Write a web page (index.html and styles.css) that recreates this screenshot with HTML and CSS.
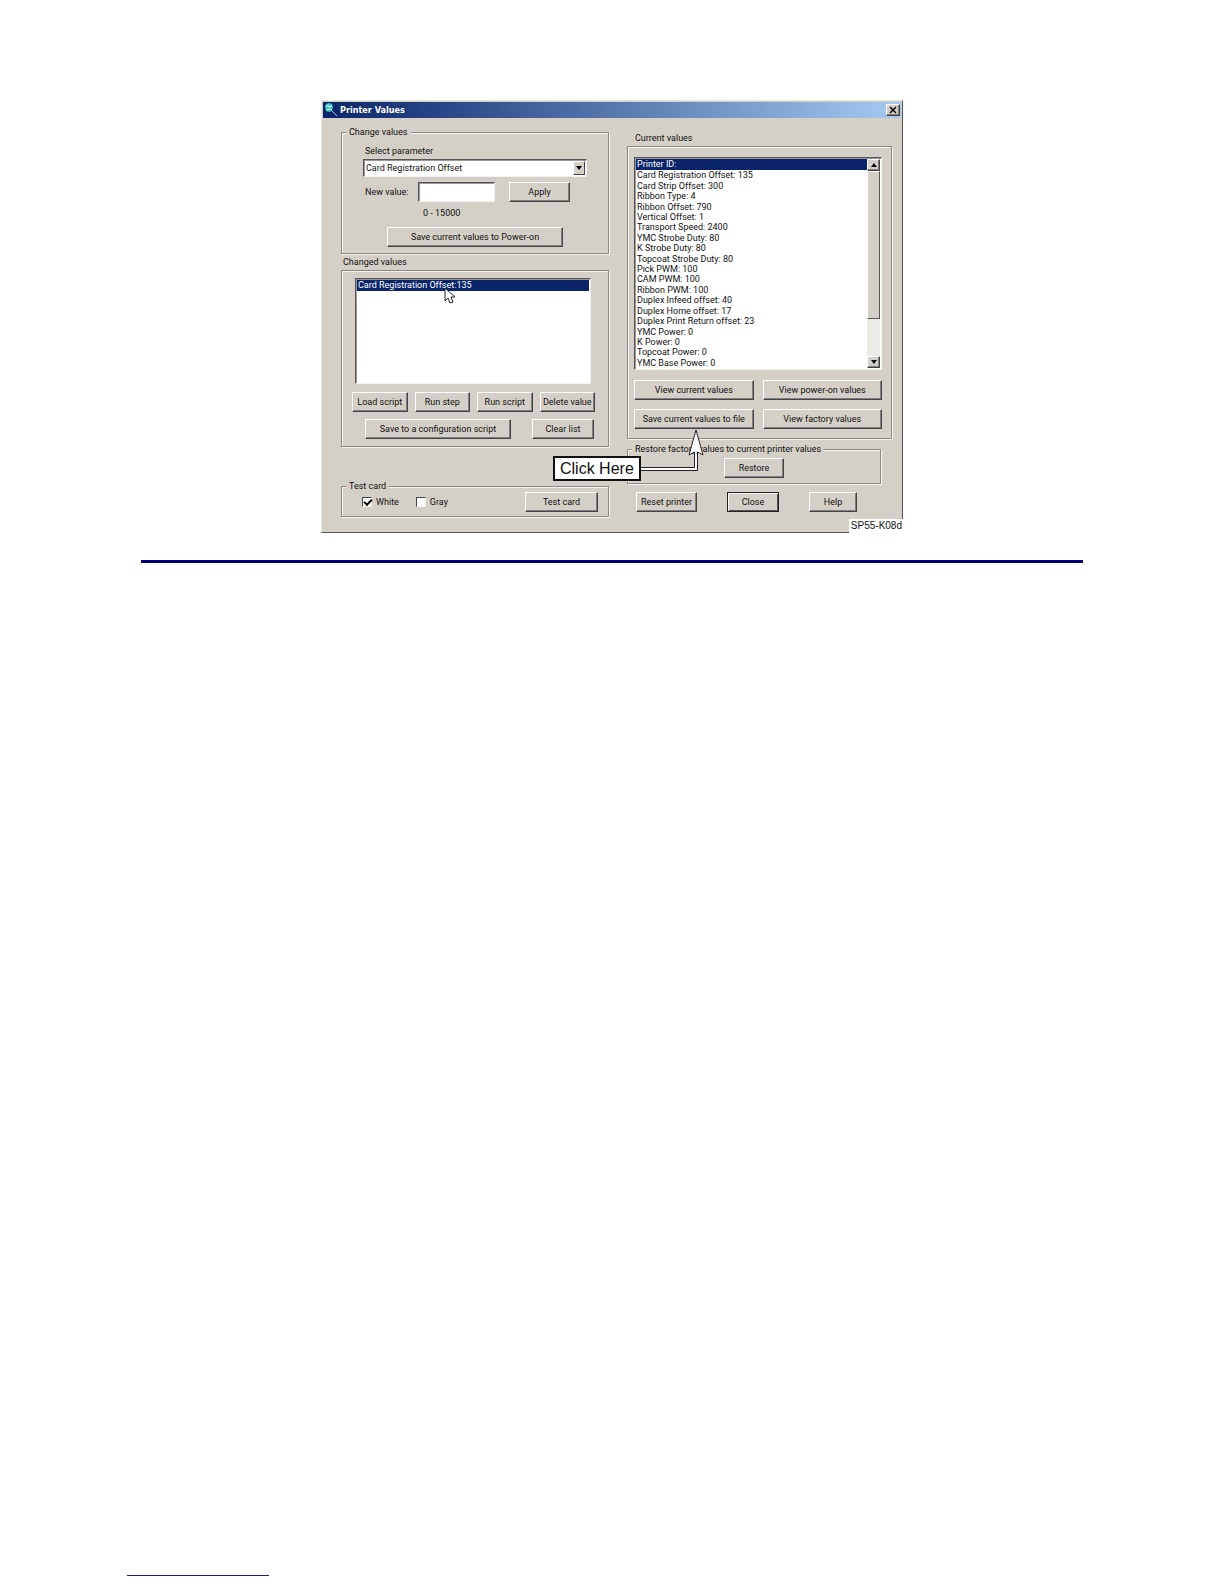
FILE: index.html
```html
<!DOCTYPE html>
<html lang="en">
<head>
    <meta charset="UTF-8">
    <meta name="viewport" content="width=device-width, initial-scale=1.0">
    <title>Printer Values</title>
    <link rel="stylesheet" href="styles.css">
</head>
<body>
    <main>
        <div class="dialog">
            <div class="title-bar">
                <svg class="app-icon" viewBox="0 0 14 14">
                    <path d="M2 1l3-1 3 1 1 3-1 4-3 1-3-1-1-4z" fill="#3fc4bf"/>
                    <path d="M2 4l2-2 1 2 3-1M3 7l3-1 2 1" stroke="#d8fffb" fill="none"/>
                    <path d="M8 8l5 5" stroke="#a9bcd8"/>
                </svg>
                <h1>Printer Values</h1>
                <button class="close-x" aria-label="Close window">
                    <svg viewBox="0 0 8 8"><path d="M1 1l6 6M7 1l-6 6" stroke="#000" stroke-width="1.5"/></svg>
                </button>
            </div>

            <div class="dialog-body">
                <div class="left">
                    <fieldset class="change">
                        <legend>Change values</legend>
                        <div class="change-body">
                            <label for="parameter">Select parameter</label>
                            <div class="dropdown">
                                <select id="parameter">
                                    <option>Card Registration Offset</option>
                                </select>
                                <span class="drop-arrow"><svg viewBox="0 0 6 4"><path d="M0 0h6L3 4z"/></svg></span>
                            </div>
                            <div class="value-row">
                                <label for="new-value">New value:</label>
                                <input type="text" id="new-value">
                                <button>Apply</button>
                            </div>
                            <div class="range">0 - 15000</div>
                            <button class="save-power">Save current values to Power-on</button>
                        </div>
                    </fieldset>

                    <div class="group-label" id="changed-label">Changed values</div>
                    <div class="group changed">
                        <ul class="list" role="listbox" aria-labelledby="changed-label">
                            <li class="selected" role="option" aria-selected="true">Card Registration Offset:135</li>
                        </ul>
                        <div class="script-buttons">
                            <button>Load script</button>
                            <button>Run step</button>
                            <button>Run script</button>
                            <button>Delete value</button>
                        </div>
                        <div class="list-buttons">
                            <button class="save-script">Save to a configuration script</button>
                            <button class="clear">Clear list</button>
                        </div>
                    </div>

                    <fieldset class="test">
                        <legend>Test card</legend>
                        <div class="test-row">
                            <label><input type="checkbox" checked>White</label>
                            <label><input type="checkbox">Gray</label>
                            <button>Test card</button>
                        </div>
                    </fieldset>
                </div>

                <div class="right">
                    <div class="group-label" id="current-label">Current values</div>
                    <div class="group current">
                        <div class="list-box">
                            <ul class="list" role="listbox" aria-labelledby="current-label">
                                <li class="selected" role="option" aria-selected="true">Printer ID:</li>
                                <li role="option">Card Registration Offset: 135</li>
                                <li role="option">Card Strip Offset: 300</li>
                                <li role="option">Ribbon Type: 4</li>
                                <li role="option">Ribbon Offset: 790</li>
                                <li role="option">Vertical Offset: 1</li>
                                <li role="option">Transport Speed: 2400</li>
                                <li role="option">YMC Strobe Duty: 80</li>
                                <li role="option">K Strobe Duty: 80</li>
                                <li role="option">Topcoat Strobe Duty: 80</li>
                                <li role="option">Pick PWM: 100</li>
                                <li role="option">CAM PWM: 100</li>
                                <li role="option">Ribbon PWM: 100</li>
                                <li role="option">Duplex Infeed offset: 40</li>
                                <li role="option">Duplex Home offset: 17</li>
                                <li role="option">Duplex Print Return offset: 23</li>
                                <li role="option">YMC Power: 0</li>
                                <li role="option">K Power: 0</li>
                                <li role="option">Topcoat Power: 0</li>
                                <li role="option">YMC Base Power: 0</li>
                            </ul>
                            <div class="scrollbar">
                                <button aria-label="Scroll up"><svg viewBox="0 0 6 4"><path d="M0 4h6L3 0z"/></svg></button>
                                <div class="thumb"></div>
                                <button aria-label="Scroll down"><svg viewBox="0 0 6 4"><path d="M0 0h6L3 4z"/></svg></button>
                            </div>
                        </div>
                        <div class="view-buttons">
                            <button>View current values</button>
                            <button>View power-on values</button>
                            <button>Save current values to file</button>
                            <button>View factory values</button>
                        </div>
                    </div>

                    <fieldset class="restore">
                        <legend>Restore factory values to current printer values</legend>
                        <button>Restore</button>
                    </fieldset>

                    <div class="bottom-buttons">
                        <button class="reset">Reset printer</button>
                        <button class="close">Close</button>
                        <button class="help">Help</button>
                    </div>
                </div>
            </div>

            <svg class="cursor" viewBox="0 0 12 18">
                <path d="M1 1v13l3-3 2 5 3-1-2-5h4z" fill="#fff" stroke="#222"/>
            </svg>

            <!-- callout -->
            <svg class="arrow" viewBox="0 0 64 46">
                <path d="M0 39.500H53.500V24L48 27L55 2L62 27L56.500 24V42.500H0" fill="#fff" stroke="#222"/>
            </svg>
            <div class="click-here">Click Here</div>
            <div class="figure-id">SP55-K08d</div>
        </div>
        <hr class="rule">
    </main>
    <footer>
        <hr>
    </footer>
</body>
</html>
```

FILE: styles.css
```css
* {
    box-sizing: border-box;
}

body {
    margin: 0;
    min-height: 100vh;
    display: flex;
    flex-direction: column;
    background-color: #fff;
    color: #111;
    font-family: Roboto, "Liberation Sans", Arial, sans-serif;
    font-size: 9px;
    line-height: 12px;
}

main {
    padding: 100px 141px 0;
}

.dialog {
    position: relative;
    max-width: 582px;
    margin: 0 auto;
    padding: 1px;
    background-color: #d4d0c8;
    border: 1px solid;
    border-color: #e8e6e0 #555 #555 #e8e6e0;
}

.title-bar {
    display: flex;
    align-items: center;
    gap: 2px;
    height: 16px;
    padding: 0 1px;
    background: linear-gradient(to right, #0a246a, #a6caf0);
}

.app-icon {
    width: 14px;
    height: 14px;
}

h1 {
    flex: 1;
    margin: 0;
    color: #fff;
    font-family: "DejaVu Sans Condensed", "DejaVu Sans", sans-serif;
    font-size: 9px;
    font-weight: bold;
}

button {
    height: 20px;
    padding: 0;
    background-color: #d4d0c8;
    border: 1px solid;
    border-color: #fff #444 #444 #fff;
    box-shadow: inset -1px -1px 0 #808080;
    color: #111;
    font: inherit;
    white-space: nowrap;
}

.close-x {
    display: flex;
    align-items: center;
    justify-content: center;
    width: 14px;
    height: 12px;
}

.close-x svg {
    width: 8px;
    height: 8px;
}

.dialog-body {
    display: grid;
    grid-template-columns: 268fr 265fr;
    gap: 18px;
    padding: 8px 9px 14px 18px;
}

/* groups */

fieldset,
.group {
    margin: 0;
    padding: 0;
    min-width: 0;
    border: 1px solid #8c8a84;
    box-shadow: 1px 1px 0 #f4f3ee, inset 1px 1px 0 #f4f3ee;
}

legend {
    margin-left: 4px;
    padding: 0 3px;
    background-color: #d4d0c8;
}

.group-label {
    margin: 2px 0;
    padding-left: 2px;
}

.right .group-label {
    margin-top: 6px;
    padding-left: 8px;
}

.change-body {
    padding: 7px 21px 6px;
}

.change label {
    display: block;
    padding-left: 2px;
}

.dropdown {
    position: relative;
    margin: 2px 0 5px;
}

select,
input[type="text"],
.changed .list,
.list-box {
    background-color: #fff;
    border: 1px solid;
    border-color: #555 #f4f3ee #f4f3ee #555;
    box-shadow: inset 1px 1px 0 #999;
    border-radius: 0;
    font: inherit;
    color: #111;
}

select {
    display: block;
    width: 100%;
    height: 18px;
    padding: 0 2px;
    appearance: none;
}

.drop-arrow {
    position: absolute;
    top: 2px;
    right: 2px;
    bottom: 2px;
    width: 12px;
    display: flex;
    align-items: center;
    justify-content: center;
    background-color: #d4d0c8;
    border: 1px solid;
    border-color: #fff #444 #444 #fff;
    pointer-events: none;
}

.drop-arrow svg,
.scrollbar svg {
    width: 6px;
    height: 4px;
}

.value-row {
    display: flex;
    align-items: center;
}

.value-row label {
    width: 55px;
}

.value-row input {
    width: 77px;
    height: 20px;
}

.value-row button {
    width: 61px;
    margin-left: 14px;
}

.range {
    margin: 5px 0 8px;
    padding-left: 60px;
}

.save-power {
    display: block;
    width: 176px;
    margin: 0 auto;
}

/* lists */

.list {
    list-style: none;
    margin: 0;
    padding: 0;
}

.list li {
    padding-left: 1px;
    line-height: 10px;
}

.list .selected {
    background-color: #0a246a;
    color: #fff;
    line-height: 11px;
}

.changed {
    padding: 7px 13px;
}

.changed .list {
    height: 106px;
    margin-right: 4px;
    padding: 1px;
}

.script-buttons {
    display: flex;
    gap: 7px;
    margin: 8px 0 7px -3px;
}

.script-buttons button {
    flex: 1;
}

.list-buttons {
    display: flex;
    justify-content: space-between;
    padding: 0 1px 0 10px;
}

.save-script {
    width: 146px;
}

.clear {
    width: 62px;
}

.test {
    margin-top: 33px;
}

.test-row {
    display: flex;
    align-items: center;
    gap: 17px;
    padding: 0 10px 4px 20px;
}

.test-row label {
    display: flex;
    align-items: center;
    gap: 4px;
}

.test-row button {
    width: 73px;
    margin-left: auto;
}

input[type="checkbox"] {
    appearance: none;
    width: 10px;
    height: 10px;
    margin: 0;
    background-color: #fff;
    border: 1px solid;
    border-color: #444 #f4f3ee #f4f3ee #444;
}

input[type="checkbox"]:checked::before {
    content: "";
    display: block;
    width: 6px;
    height: 3px;
    margin: 1px;
    border: solid #000;
    border-width: 0 0 2px 2px;
    transform: rotate(-45deg);
}

.current {
    padding: 10px 9px 9px 6px;
}

.list-box {
    display: flex;
    height: 213px;
    padding: 1px;
}

.list-box .list {
    flex: 1;
    display: flex;
    flex-direction: column;
    justify-content: space-between;
}

.scrollbar {
    display: flex;
    flex-direction: column;
    width: 13px;
    background-color: #ecebe6;
}

.scrollbar button {
    display: flex;
    align-items: center;
    justify-content: center;
    height: 12px;
}

.scrollbar button:last-child {
    margin-top: auto;
}

.thumb {
    height: 148px;
    background-color: #d4d0c8;
    border: 1px solid;
    border-color: #fff #555 #555 #fff;
}

.view-buttons {
    display: grid;
    grid-template-columns: 1fr 1fr;
    gap: 9px;
    margin-top: 10px;
}

.restore {
    margin: 4px 11px 8px 0;
    padding: 3px 0 5px;
}

.restore button {
    display: block;
    width: 60px;
    margin: 0 auto;
}

.bottom-buttons {
    display: flex;
    gap: 30px;
    padding-left: 9px;
}

.reset {
    width: 61px;
}

.close {
    width: 52px;
    border-color: #222;
    box-shadow: inset 1px 1px 0 #fff, inset -1px -1px 0 #555;
}

.help {
    width: 48px;
}

/* items lying over the dialog */

.cursor {
    position: absolute;
    left: 122px;
    top: 186px;
    width: 12px;
    height: 18px;
}

.arrow {
    position: absolute;
    left: 319px;
    top: 327px;
    width: 64px;
    height: 46px;
}

.click-here {
    position: absolute;
    left: 231px;
    top: 355px;
    padding: 0 5px;
    background-color: #fff;
    border: 2px solid #111;
    font-family: "Liberation Sans", Arial, sans-serif;
    font-size: 16px;
    line-height: 21px;
}

.figure-id {
    position: absolute;
    right: -1px;
    bottom: -1px;
    padding: 1px 1px 1px 2px;
    background-color: #fff;
    font-family: "Liberation Sans", Arial, sans-serif;
    font-size: 10px;
}

.rule {
    height: 3px;
    margin: 27px 0 0;
    border: 0;
    background-color: #000072;
}

footer {
    margin-top: auto;
    padding: 0 127px 8px;
}

footer hr {
    width: 142px;
    height: 1px;
    margin: 0;
    border: 0;
    background-color: #1a1a8c;
}
```
